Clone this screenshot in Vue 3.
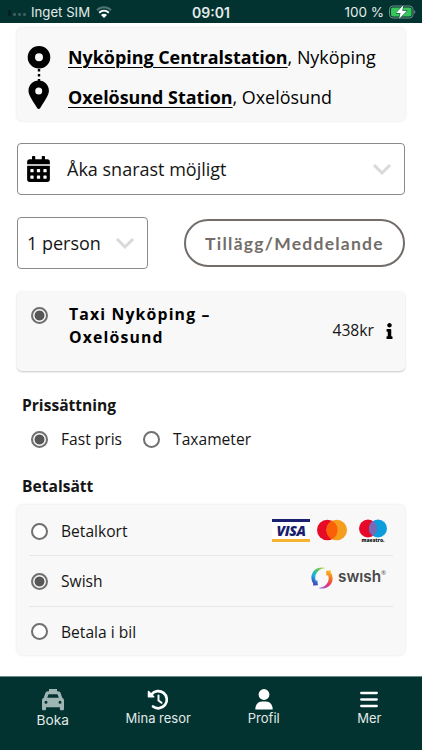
<template>
  <div class="app">
    <header class="status-bar">
      <div class="status-left">
        <span class="signal"><i></i><i></i><i></i><i></i></span>
        <span class="carrier">Inget SIM</span>
        <svg class="wifi" viewBox="0 0 16 12">
          <path d="M1 4.200C5 .3 11 .3 15 4.200" stroke="#4f7371" stroke-width="2" fill="none" />
          <path d="M3.200 6.800c2.800-2.600 6.800-2.600 9.600 0" stroke="#fff" stroke-width="2" fill="none" />
          <path d="M5 9c1.700-1.700 4.300-1.700 6 0l-3 3z" fill="#fff" />
        </svg>
      </div>
      <span class="clock">09:01</span>
      <div class="status-right">
        <span class="percent">100 %</span>
        <svg class="battery" viewBox="0 0 27 14">
          <rect x=".5" y="1" width="23.500" height="12" rx="3.500" fill="none" stroke="#71918e" />
          <rect x="2" y="2.500" width="20.500" height="9" rx="2" fill="#35c759" />
          <path d="M25.300 5v4c1.400-.6 1.400-3.400 0-4z" fill="#71918e" />
          <path d="M14.500 0L7 8h4.500L10 14l8-8.300h-4.700z" fill="#fff" stroke="#033330" stroke-width="1" paint-order="stroke" />
        </svg>
      </div>
    </header>

    <main class="content">
      <section class="card route">
        <svg class="route-icon" viewBox="0 0 24 66">
          <path fill-rule="evenodd" d="M12 1a11.300 11.300 0 1 0 0 22.600A11.300 11.300 0 0 0 12 1zm0 7.300a4 4 0 1 1 0 8 4 4 0 0 1 0-8z" />
          <path d="M12 24v12" stroke="#000" stroke-width="2.400" stroke-dasharray="2.400 2.600" />
          <path fill-rule="evenodd" d="M11.700 35.400C5.800 35.400 1.500 39.900 1.500 45.500c0 4 1.500 6.200 8.800 17.800.7 1 2.100 1 2.800 0 7.300-11.600 8.800-13.800 8.800-17.800 0-5.600-4.300-10.100-10.200-10.100zm0 7a3.500 3.500 0 1 1 0 7 3.500 3.500 0 0 1 0-7z" />
        </svg>
        <div class="route-lines">
          <div v-for="stop in stops" :key="stop.name" class="route-line">
            <b>{{ stop.name }}</b>, {{ stop.city }}
          </div>
        </div>
      </section>

      <div class="select date-select">
        <svg class="calendar" viewBox="0 0 448 512">
          <path fill-rule="evenodd" d="M0 464c0 26.500 21.500 48 48 48h352c26.500 0 48-21.500 48-48V192H0v272zm320-196c0-6.600 5.400-12 12-12h40c6.600 0 12 5.400 12 12v40c0 6.600-5.400 12-12 12h-40c-6.600 0-12-5.400-12-12v-40zm0 128c0-6.600 5.400-12 12-12h40c6.600 0 12 5.400 12 12v40c0 6.600-5.400 12-12 12h-40c-6.600 0-12-5.400-12-12v-40zM192 268c0-6.600 5.400-12 12-12h40c6.600 0 12 5.400 12 12v40c0 6.600-5.400 12-12 12h-40c-6.600 0-12-5.400-12-12v-40zm0 128c0-6.600 5.400-12 12-12h40c6.600 0 12 5.400 12 12v40c0 6.600-5.400 12-12 12h-40c-6.600 0-12-5.400-12-12v-40zM64 268c0-6.600 5.400-12 12-12h40c6.600 0 12 5.400 12 12v40c0 6.600-5.400 12-12 12H76c-6.600 0-12-5.400-12-12v-40zm0 128c0-6.600 5.400-12 12-12h40c6.600 0 12 5.400 12 12v40c0 6.600-5.400 12-12 12H76c-6.600 0-12-5.400-12-12v-40zM400 64h-48V16c0-8.800-7.200-16-16-16h-32c-8.800 0-16 7.200-16 16v48H160V16c0-8.800-7.200-16-16-16h-32c-8.800 0-16 7.200-16 16v48H48C21.500 64 0 85.500 0 112v48h448v-48c0-26.500-21.500-48-48-48z" />
        </svg>
        <span class="select-text">Åka snarast möjligt</span>
        <svg class="chevron" viewBox="0 0 20 13"><path d="M2 2l8 8 8-8" /></svg>
      </div>

      <div class="options">
        <div class="select person-select">
          <span class="select-text">1 person</span>
          <svg class="chevron" viewBox="0 0 20 13"><path d="M2 2l8 8 8-8" /></svg>
        </div>
        <button class="message-btn">Tillägg/Meddelande</button>
      </div>

      <section class="card ride">
        <span class="radio checked"></span>
        <h3 class="ride-name">Taxi Nyköping –<br />Oxelösund</h3>
        <span class="ride-price">438kr</span>
        <svg class="info" viewBox="0 0 192 512">
          <path d="M20 424.200h20V279.800H20c-11 0-20-9-20-20V212c0-11 9-20 20-20h112c11 0 20 9 20 20v212.200h20c11 0 20 9 20 20V492c0 11-9 20-20 20H20c-11 0-20-9-20-20v-47.800c0-11 9-20 20-20zM96 0C56.200 0 24 32.200 24 72s32.200 72 72 72 72-32.200 72-72S135.800 0 96 0z" />
        </svg>
      </section>

      <h4 class="heading">Prissättning</h4>
      <div class="pricing">
        <label v-for="p in pricing" :key="p.label" class="choice">
          <span class="radio" :class="{ checked: p.checked }"></span>{{ p.label }}
        </label>
      </div>

      <h4 class="heading pay-heading">Betalsätt</h4>
      <section class="card payments">
        <div v-for="m in methods" :key="m.id" class="payment">
          <span class="radio" :class="{ checked: m.id === selected }"></span>
          <span class="payment-label">{{ m.label }}</span>
          <div v-if="m.id === 'card'" class="brands">
            <div class="visa">VISA</div>
            <svg class="mastercard" viewBox="0 0 30 22">
              <circle cx="10.300" cy="11" r="10.300" fill="#e80b26" />
              <circle cx="19.700" cy="11" r="10.300" fill="#f59d1c" />
              <path d="M15 1.840a10.300 10.300 0 0 1 0 18.320a10.300 10.300 0 0 1 0-18.320z" fill="#fb6009" />
            </svg>
            <div class="maestro">
              <svg viewBox="0 0 30 19">
                <circle cx="10" cy="9.500" r="9" fill="#e8092a" />
                <circle cx="20" cy="9.500" r="9" fill="#0c9ddd" />
                <path d="M15 2a9 9 0 0 1 0 15a9 9 0 0 1 0-15z" fill="#7a68b5" />
              </svg>
              <span>maestro.</span>
            </div>
          </div>
          <div v-if="m.id === 'swish'" class="swish">
            <svg viewBox="0 0 22 22">
              <defs>
                <linearGradient id="cool" x1=".8" y1="0" x2=".2" y2="1">
                  <stop offset="0" stop-color="#b5d43a" />
                  <stop offset=".3" stop-color="#46c36f" />
                  <stop offset=".6" stop-color="#19b6e0" />
                  <stop offset="1" stop-color="#4a2fb5" />
                </linearGradient>
                <linearGradient id="warm" x1=".6" y1="0" x2=".2" y2="1">
                  <stop offset="0" stop-color="#f8b51d" />
                  <stop offset=".35" stop-color="#f16a22" />
                  <stop offset=".65" stop-color="#e4327e" />
                  <stop offset="1" stop-color="#9b5fe0" />
                </linearGradient>
              </defs>
              <path d="M14.500.9C8-1 1.500 2.500.5 9c-.4 3 .4 5.700 2 7.900L1.800 18.500l5.200-.3-.7-5.100-1.300 1C2.500 8.500 6.500 1.600 14.500.9z" fill="url(#cool)" />
              <path d="M7.500 21.100c6.500 1.900 13-1.600 14-8.100.4-3-.4-5.700-2-7.900l.7-1.600-5.200.3.700 5.100 1.300-1c2.500 5.600-1.500 12.500-9.500 13.200z" fill="url(#warm)" />
            </svg>
            <span class="swish-name">swısh</span><sup>®</sup>
          </div>
        </div>
      </section>
    </main>

    <nav class="tab-bar">
      <a class="tab active">
        <svg viewBox="0 0 22 22">
          <path fill-rule="evenodd" d="M7 0h8v2.300h1c1.300 0 2.200.7 2.700 1.900l1.500 4.600c1.100.4 1.800 1.300 1.800 2.500V20c0 .8-.5 1.300-1.300 1.300h-1.500c-.8 0-1.300-.5-1.300-1.300v-1.800H4V20c0 .8-.5 1.300-1.300 1.300H1.300C.5 21.300 0 20.800 0 20v-8.700c0-1.200.7-2.100 1.800-2.500l1.500-4.600C3.800 3 4.700 2.300 6 2.300h1zM6.500 5.200L5.200 8.700h11.600l-1.300-3.500zM4 11.800a1.500 1.500 0 1 0 0 3 1.500 1.500 0 0 0 0-3zm14 0a1.500 1.500 0 1 0 0 3 1.500 1.500 0 0 0 0-3z" />
        </svg>
        <span>Boka</span>
      </a>
      <a class="tab">
        <svg viewBox="0 0 22 22" class="line">
          <path d="M4.500 5.300A8.600 8.600 0 1 1 6 17.500" stroke-width="2.700" />
          <path d="M11.500 6.500v5l3 2.300" stroke-width="2" />
          <path d="M1.500 2.500v5.200h5.200z" fill="#fff" stroke-width="1.500" />
        </svg>
        <span>Mina resor</span>
      </a>
      <a class="tab">
        <svg viewBox="0 0 22 22">
          <circle cx="11" cy="5.500" r="5.400" />
          <path d="M2.300 20.500c0-5 2.800-8 6.700-8h4c3.900 0 6.700 3 6.700 8z" />
        </svg>
        <span>Profil</span>
      </a>
      <a class="tab">
        <svg viewBox="0 0 22 22" class="line">
          <path d="M3.200 4h15.600M3.200 10.500h15.600M3.200 17h15.600" stroke-width="2.300" />
        </svg>
        <span>Mer</span>
      </a>
    </nav>
  </div>
</template>

<script setup>
import { ref } from 'vue'

const stops = [
  { name: 'Nyköping Centralstation', city: 'Nyköping' },
  { name: 'Oxelösund Station', city: 'Oxelösund' }
]

const pricing = [
  { label: 'Fast pris', checked: true },
  { label: 'Taxameter', checked: false }
]

const methods = [
  { id: 'card', label: 'Betalkort' },
  { id: 'swish', label: 'Swish' },
  { id: 'car', label: 'Betala i bil' }
]

const selected = ref('swish')
</script>

<style>
body {
  margin: 0;
  background: #fff;
}
</style>

<style scoped>
.app {
  width: 422px;
  height: 750px;
  display: flex;
  flex-direction: column;
  overflow: hidden;
  background: #fff;
  color: #151515;
  font-family: 'Open Sans', 'Noto Sans', sans-serif;
}

.app * {
  box-sizing: border-box;
}

svg {
  display: block;
  flex: none;
}

/* Status bar */
.status-bar {
  height: 23px;
  flex: none;
  display: grid;
  grid-template-columns: 1fr auto 1fr;
  align-items: center;
  padding: 1px 6px 0 8px;
  background: #033330;
  color: #e4eceb;
  font-family: Inter, sans-serif;
  font-size: 13.2px;
}

.status-left,
.status-right {
  display: flex;
  align-items: center;
}

.status-right {
  justify-content: flex-end;
  gap: 5px;
}

.percent {
  font-size: 13.5px;
}

.signal {
  display: flex;
  align-items: flex-end;
  gap: 2px;
  height: 7px;
  margin-right: 5px;
}

.signal i {
  width: 3px;
  height: 3px;
  border-radius: 1px;
  background: #375d5a;
}

.signal i:first-child {
  height: 6px;
  background: #012220;
}

.wifi {
  width: 16px;
  height: 12px;
  margin-left: 6px;
}

.clock {
  margin-right: 2px;
  font-weight: 600;
  font-size: 14px;
}

.battery {
  width: 27px;
  height: 14px;
}

/* Content */
.content {
  flex: 1;
  padding: 5px 17px 0;
}

.card {
  background: #f8f8f8;
  border-radius: 5px;
  box-shadow: 0 0 3px rgba(0, 0, 0, 0.12);
}

.route {
  height: 93px;
  display: flex;
  padding: 17px 10px 0;
  color: #000;
}

.route-icon {
  width: 24px;
  height: 66px;
}

.route-lines {
  margin: -8px 0 0 17px;
}

.route-line {
  height: 40px;
  line-height: 40px;
  font-size: 17.9px;
  white-space: nowrap;
}

.route-line b {
  text-decoration: underline;
  text-decoration-thickness: 1px;
  text-underline-offset: 3px;
}

.select {
  height: 52px;
  display: flex;
  align-items: center;
  border: 1px solid #8a8a8a;
  border-radius: 4px;
  font-size: 18px;
}

.date-select {
  margin-top: 22px;
  padding: 0 12px 0 9px;
}

.calendar {
  width: 23px;
  height: 26px;
}

.date-select .select-text {
  flex: 1;
  margin-left: 17px;
}

.chevron {
  width: 20px;
  height: 13px;
  fill: none;
  stroke: #d9d9d9;
  stroke-width: 3;
}

.options {
  display: flex;
  justify-content: space-between;
  align-items: center;
  margin-top: 22px;
}

.person-select {
  width: 131px;
  justify-content: space-between;
  padding: 0 12px 0 9px;
}

.message-btn {
  width: 221px;
  height: 48px;
  padding: 0;
  border: 2px solid #736d69;
  border-radius: 24px;
  background: #fff;
  color: #736d69;
  font-family: Lato, sans-serif;
  font-size: 17.5px;
  font-weight: 700;
  letter-spacing: 1.25px;
}

.ride {
  height: 80px;
  display: flex;
  margin-top: 22px;
  padding: 12px 12px 0 14px;
  box-shadow: 0 1px 2px rgba(0, 0, 0, 0.22);
}

.radio {
  flex: none;
  width: 17px;
  height: 17px;
  border: 2px solid #707070;
  border-radius: 50%;
  background: #fff;
}

.radio.checked {
  background: radial-gradient(circle, #575757 4.6px, #f4f4f4 5.3px);
}

.ride .radio {
  margin-top: 4px;
}

.ride-name {
  flex: 1;
  margin: 0 0 0 21px;
  color: #000;
  font-size: 15.8px;
  line-height: 22.5px;
  letter-spacing: 1.15px;
}

.ride-price {
  margin-top: 16px;
  font-size: 15.7px;
  line-height: 22px;
}

.info {
  width: 7px;
  height: 16px;
  margin: 20px 0 0 12px;
}

.heading {
  margin: 23px 0 0 5px;
  font-size: 15.6px;
  line-height: 22px;
}

.pricing {
  display: flex;
  gap: 21px;
  margin: 12px 0 0 14px;
}

.choice {
  display: flex;
  align-items: center;
  gap: 13px;
  font-size: 15.6px;
  line-height: 23px;
}

.pay-heading {
  margin-top: 24px;
}

.payments {
  margin-top: 8px;
  height: 150px;
  padding: 0 12px;
}

.payment {
  height: 50.3px;
  display: flex;
  align-items: center;
  padding: 1px 6px 0 2px;
  font-size: 15.6px;
}

.payment:first-child {
  padding-top: 2px;
}

.payment + .payment {
  border-top: 1px solid #e7e7e7;
}

.payment-label {
  flex: 1;
  margin-left: 13px;
}

.brands {
  display: flex;
  align-items: center;
  margin-top: -2px;
}

.visa {
  width: 38px;
  height: 23px;
  margin-right: 7px;
  border-top: 3px solid #1b1f70;
  border-bottom: 3px solid #f5b330;
  background: #fff;
  color: #191e6e;
  font-family: 'Open Sans', sans-serif;
  font-size: 14px;
  font-style: italic;
  font-weight: 800;
  letter-spacing: -0.4px;
  line-height: 17px;
  text-align: center;
}

.mastercard {
  width: 30px;
  height: 22px;
}

.maestro {
  width: 30px;
  margin: 1px -1px 0 11px;
}

.maestro svg {
  width: 30px;
  height: 19px;
}

.maestro span {
  display: block;
  color: #111;
  font-size: 5px;
  font-weight: 800;
  line-height: 4px;
  text-align: center;
}

.swish {
  display: flex;
  align-items: center;
  margin: -7px 1px 0 0;
  color: #48484a;
}

.swish svg {
  width: 22px;
  height: 22px;
  margin-right: 5px;
}

.swish-name {
  margin-top: -2px;
  font-family: Inter, sans-serif;
  font-size: 15.3px;
  font-weight: 600;
  line-height: 20px;
}

.swish sup {
  align-self: flex-start;
  font-size: 6px;
  line-height: 12px;
}

/* Tab bar */
.tab-bar {
  flex: none;
  height: 74px;
  display: grid;
  grid-template-columns: repeat(4, 1fr);
  background: #033330;
  border-top: 1px solid #6f8b89;
  color: #e0eae9;
  font-family: Inter, sans-serif;
  font-size: 13px;
}

.tab {
  display: flex;
  flex-direction: column;
  align-items: center;
  padding-top: 12px;
}

.tab svg {
  width: 22px;
  height: 22px;
  fill: #fff;
}

.tab svg.line {
  fill: none;
  stroke: #fff;
  stroke-linecap: round;
  stroke-linejoin: round;
}

.tab span {
  line-height: 15px;
}

.tab.active svg {
  fill: #9eb5b3;
}

.tab.active span {
  margin-top: 1px;
  font-size: 13.7px;
  line-height: 16px;
}
</style>
